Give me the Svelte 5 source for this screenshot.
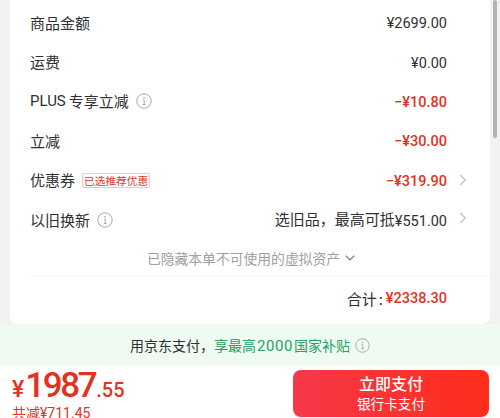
<script>
  const rows = [
    { label: "商品金额", value: "¥2699.00" },
    { label: "运费", value: "¥0.00" },
    { prefix: "PLUS", label: "专享立减", value: "−¥10.80", info: true, red: true },
    { label: "立减", value: "−¥30.00", red: true },
    { label: "优惠券", value: "−¥319.90", tag: "已选推荐优惠", red: true, arrow: true },
    { label: "以旧换新", hint: "选旧品，最高可抵", value: "¥551.00", info: true, arrow: true },
  ];
</script>

{#snippet info(size)}
  <svg class="info" width={size} height={size} viewBox="0 0 16 16" fill="none">
    <circle cx="8" cy="8" r="7.2" stroke="#a8a8a8" stroke-width="1" />
    <circle cx="8" cy="4.9" r="0.8" fill="#a8a8a8" />
    <path d="M7 7.1h1.2v4.4M6.8 11.5h2.6" stroke="#a8a8a8" stroke-width="1" />
  </svg>
{/snippet}

<div class="page">
  <div class="scrollbar"></div>
  <div class="card">
    {#each rows as row}
      <div class="row">
        <div class="left">
          {#if row.prefix}<span class="prefix">{row.prefix}</span>{/if}
          <span class="label">{row.label}</span>
          {#if row.info}{@render info(16)}{/if}
          {#if row.tag}<span class="tag">{row.tag}</span>{/if}
        </div>
        <div class="right" class:red={row.red}>
          {#if row.hint}<span class="hint">{row.hint}</span>{/if}<span>{row.value}</span>
          {#if row.arrow}
            <svg class="arrow" width="8" height="12" viewBox="0 0 8 12" fill="none">
              <path d="M1.2 1l5 5-5 5" stroke="#c4c4c4" stroke-width="1.4" />
            </svg>
          {/if}
        </div>
      </div>
    {/each}
    <div class="hidden-note">
      <span>已隐藏本单不可使用的虚拟资产</span>
      <svg width="10" height="6" viewBox="0 0 10 6" fill="none">
        <path d="M0.7 0.7L5 5l4.3-4.3" stroke="#777" stroke-width="1.2" />
      </svg>
    </div>
    <div class="total">
      <span>合计</span><span class="colon">:</span><span class="total-num">¥2338.30</span>
    </div>
  </div>

  <div class="banner">
    <span>用京东支付，</span><span class="green">享最高<span class="num">2000</span>国家补贴</span>
    {@render info(15)}
  </div>

  <div class="footer">
    <div class="price">
      <div class="amount"><span class="yen">¥</span><span class="int">1987</span><span class="dec">.55</span></div>
      <div class="saved"><span class="saved-label">共减</span>¥711.45</div>
    </div>
    <button class="pay">
      <span class="pay-main">立即支付</span>
      <span class="pay-sub">银行卡支付</span>
    </button>
  </div>
</div>

<style>
  :global(body) {
    margin: 0;
  }
  .page {
    position: relative;
    width: 500px;
    height: 418px;
    overflow: hidden;
    background: #f2f2f2;
    font-family: "Noto Sans CJK SC", "Roboto", sans-serif;
    color: #303030;
  }
  .scrollbar {
    position: absolute;
    top: 0;
    right: 3px;
    width: 4px;
    height: 138px;
    background: #b4b4b4;
    border-radius: 2px;
  }
  .card {
    box-sizing: border-box;
    height: 324px;
    margin: 0 10px 0 10px;
    padding: 3px 43px 0 20px;
    background: #fff;
    border-radius: 0 0 8px 8px;
  }
  .row {
    display: flex;
    align-items: center;
    justify-content: space-between;
    height: 39.4px;
    font-size: 15px;
    line-height: 20px;
  }
  .left {
    display: flex;
    align-items: center;
  }
  .prefix {
    margin-right: 3px;
    font-family: "Roboto", sans-serif;
    font-size: 15px;
  }
  .info {
    margin-left: 7px;
  }
  .tag {
    margin-left: 7px;
    padding: 0 1px;
    font-size: 10.7px;
    line-height: 13px;
    color: #e2382c;
    border: 1px solid #f5c4bf;
    border-radius: 2px;
  }
  .right {
    position: relative;
    padding-top: 3px;
    font-size: 14.5px;
    font-family: "Roboto", "Noto Sans CJK SC", sans-serif;
  }
  .hint {
    position: relative;
    top: -1px;
    font-family: "Noto Sans CJK SC", sans-serif;
    font-size: 15px;
  }
  .right.red {
    color: #e2331f;
    font-weight: 500;
  }
  .arrow {
    position: absolute;
    left: calc(100% + 12px);
    top: 5px;
  }
  .hidden-note {
    display: flex;
    align-items: center;
    justify-content: center;
    gap: 5px;
    height: 37px;
    margin-right: -43px;
    padding-right: 18px;
    font-size: 13.8px;
    color: #a0a0a0;
    border-bottom: 1px solid #f7f7f7;
  }
  .total {
    display: flex;
    align-items: center;
    justify-content: flex-end;
    height: 43px;
    font-size: 14.5px;
  }
  .total > span:first-child {
    font-size: 15px;
  }
  .colon {
    margin: 0 3px 0 2px;
  }
  .total-num {
    font-family: "Roboto", sans-serif;
    font-weight: 500;
    color: #e2331f;
  }
  .banner {
    display: flex;
    align-items: center;
    justify-content: center;
    height: 42px;
    background: #eefaf2;
    font-size: 14px;
  }
  .green {
    color: #28a062;
  }
  .num {
    margin: 0 1px;
    font-family: "Roboto", sans-serif;
    font-size: 15px;
    font-weight: 400;
    letter-spacing: 0.6px;
  }
  .banner .green + :global(svg) {
    margin-left: 5px;
  }
  .footer {
    display: flex;
    align-items: flex-start;
    justify-content: space-between;
    height: 52px;
    padding: 0 11px 0 12px;
    background: #fff;
  }
  .price {
    color: #e2331f;
    font-family: "Roboto", sans-serif;
  }
  .amount {
    display: flex;
    align-items: baseline;
    height: 36px;
    margin-top: 2px;
    line-height: 36px;
    font-weight: 500;
  }
  .yen {
    margin-right: 1px;
    font-size: 23px;
  }
  .int {
    font-size: 35px;
    letter-spacing: -2.4px;
  }
  .dec {
    margin-left: 1px;
    font-size: 20px;
  }
  .saved {
    font-size: 14px;
    line-height: 16px;
  }
  .saved-label {
    font-family: "Noto Sans CJK SC", sans-serif;
  }
  .pay {
    display: flex;
    flex-direction: column;
    align-items: center;
    justify-content: center;
    box-sizing: border-box;
    width: 196px;
    height: 47px;
    margin-top: 4px;
    padding: 0 0 4px;
    border: none;
    border-radius: 8px;
    background: linear-gradient(90deg, #f5384a, #ff2d1a);
    color: #fff;
    font-family: inherit;
  }
  .pay-main {
    font-size: 16px;
    line-height: 22px;
    font-weight: 500;
  }
  .pay-sub {
    font-size: 13.6px;
    line-height: 18px;
  }
</style>
